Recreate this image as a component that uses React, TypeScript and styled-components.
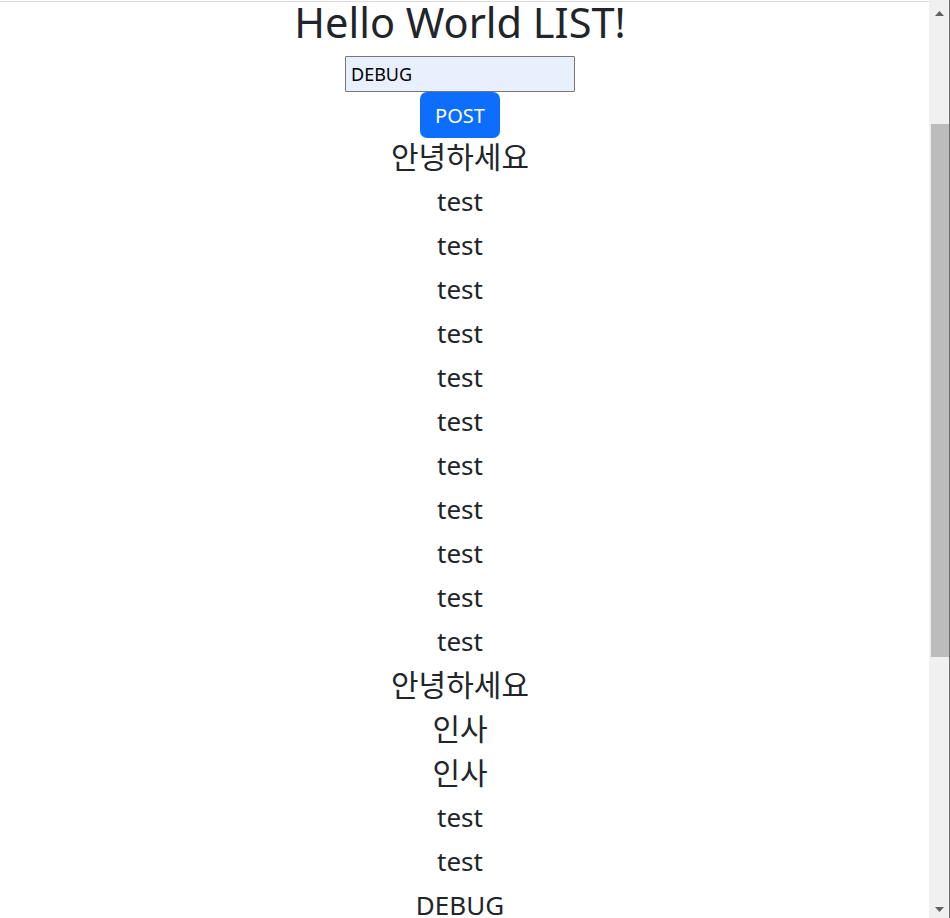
import React from "react";
import styled, { createGlobalStyle } from "styled-components";

const GlobalStyle = createGlobalStyle`
  html,
  body {
    margin: 0;
    padding: 0;
    background: #fff;
  }
  body {
    font-family: "Noto Sans", "Noto Sans CJK KR", sans-serif;
    color: #212529;
  }
`;

const Page = styled.div`
  margin-top: 1px;
  border-top: 1px solid #dadada;
`;

const Main = styled.main`
  width: 920px;
  display: flex;
  flex-direction: column;
  align-items: center;
`;

const Title = styled.h1`
  margin: 0 0 14px;
  font-size: 41.5px;
  line-height: 40px;
  font-weight: 400;
`;

const TextInput = styled.input`
  width: 230px;
  height: 36px;
  box-sizing: border-box;
  padding: 0 5px;
  border: 1px solid #767676;
  border-radius: 1px;
  background: #e8f0fe;
  color: #000;
  font-family: inherit;
  font-size: 18px;
  outline: none;
`;

const PostButton = styled.button`
  height: 46px;
  padding: 2px 15px 0;
  border: none;
  border-radius: 7px;
  background: #0d6efd;
  color: #fff;
  font-family: inherit;
  font-size: 20px;
  line-height: 44px;
  cursor: pointer;
`;

const List = styled.div`
  display: flex;
  flex-direction: column;
  align-items: center;
`;

type ItemProps = {
  $cjk?: boolean;
};

const Item = styled.h2<ItemProps>`
  margin: 0 0 6px;
  font-size: ${({ $cjk }) => ($cjk ? "30px" : "26px")};
  line-height: 38px;
  font-weight: 400;
`;

// window scrollbar, drawn since the headless page hides the real one
const ScrollBar = styled.div`
  position: fixed;
  top: 0;
  right: 0;
  bottom: 0;
  width: 20px;
  display: flex;
  flex-direction: column;
  background: #f0f0f0;
  border-right: 1px solid #6e6e6e;
`;

type ArrowProps = {
  $height: number;
};

const Arrow = styled.div<ArrowProps>`
  height: ${({ $height }) => $height}px;
  flex-shrink: 0;
  display: flex;
  align-items: center;
  justify-content: center;
`;

const Track = styled.div`
  flex: 1;
  padding: 98px 0 0 2px;
`;

const Thumb = styled.div`
  height: 533px;
  background: #bcbcbc;
`;

const posts = [
  "안녕하세요",
  "test",
  "test",
  "test",
  "test",
  "test",
  "test",
  "test",
  "test",
  "test",
  "test",
  "test",
  "안녕하세요",
  "인사",
  "인사",
  "test",
  "test",
  "DEBUG",
];

const hangul = /[\uac00-\ud7a3]/;

function App() {
  return (
    <>
      <GlobalStyle />
      <Page>
        <Main>
          <Title>Hello World LIST!</Title>
          <TextInput type="text" defaultValue="DEBUG" />
          <PostButton type="button">POST</PostButton>
          <List>
            {posts.map((post, i) => (
              <Item key={i} $cjk={hangul.test(post)}>
                {post}
              </Item>
            ))}
          </List>
        </Main>
      </Page>
      <ScrollBar>
        <Arrow $height={26}>
          <svg width="9" height="5" viewBox="0 0 9 5">
            <path d="M0 5 L4.5 0 L9 5 Z" fill="#606060" />
          </svg>
        </Arrow>
        <Track>
          <Thumb />
        </Track>
        <Arrow $height={17}>
          <svg width="9" height="5" viewBox="0 0 9 5">
            <path d="M0 0 L4.5 5 L9 0 Z" fill="#606060" />
          </svg>
        </Arrow>
      </ScrollBar>
    </>
  );
}

export default App;
